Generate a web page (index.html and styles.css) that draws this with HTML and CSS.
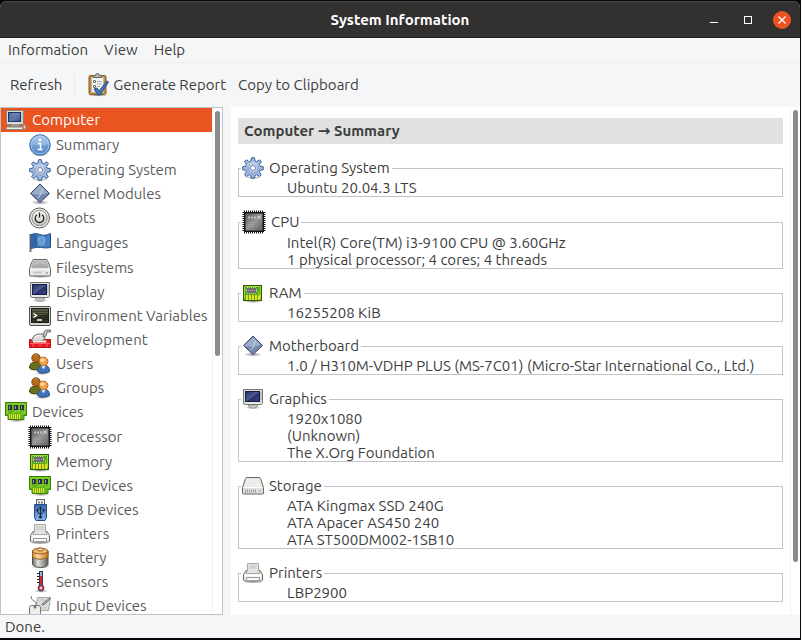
FILE: index.html
```html
<!DOCTYPE html>
<html lang="en">
<head>
<meta charset="utf-8">
<title>System Information</title>
<link rel="stylesheet" href="styles.css">
</head>
<body>
<svg class="sprite" aria-hidden="true">
  <defs>
    <linearGradient id="g-screen" x1="0" y1="0" x2="1" y2="1"><stop offset="0" stop-color="#2c3e76"/><stop offset=".55" stop-color="#5f7bb2"/><stop offset="1" stop-color="#3b4c82"/></linearGradient>
    <linearGradient id="g-dark" x1="0" y1="0" x2="1" y2="1"><stop offset="0" stop-color="#2a3264"/><stop offset=".5" stop-color="#4d5b90"/><stop offset=".55" stop-color="#28306a"/><stop offset="1" stop-color="#39447a"/></linearGradient>
    <linearGradient id="g-info" x1="0" y1="0" x2="0" y2="1"><stop offset="0" stop-color="#94bce8"/><stop offset="1" stop-color="#4e85c6"/></linearGradient>
    <linearGradient id="g-metal" x1="0" y1="0" x2="0" y2="1"><stop offset="0" stop-color="#fdfdfd"/><stop offset="1" stop-color="#c4c4c2"/></linearGradient>
    <linearGradient id="g-chip" x1="0" y1="0" x2="1" y2="1"><stop offset="0" stop-color="#5a5a5a"/><stop offset=".5" stop-color="#979797"/><stop offset="1" stop-color="#606060"/></linearGradient>
    <linearGradient id="g-can" x1="0" y1="0" x2="1" y2="0"><stop offset="0" stop-color="#686862"/><stop offset=".35" stop-color="#e3e3df"/><stop offset="1" stop-color="#60605b"/></linearGradient>
    <linearGradient id="g-copper" x1="0" y1="0" x2="1" y2="0"><stop offset="0" stop-color="#d98f35"/><stop offset=".35" stop-color="#fbdca4"/><stop offset="1" stop-color="#c2761f"/></linearGradient>
    <linearGradient id="g-usb" x1="0" y1="0" x2="0" y2="1"><stop offset="0" stop-color="#3868ae"/><stop offset="1" stop-color="#86b2e6"/></linearGradient>
    <radialGradient id="g-shade"><stop offset="0" stop-color="#000" stop-opacity=".45"/><stop offset="1" stop-color="#000" stop-opacity="0"/></radialGradient>
  </defs>
  <symbol id="i-computer" viewBox="0 0 22 22">
    <path d="M1.500 1.500h16l1 1v12l-1 1h-16z" fill="#dcdcd8" stroke="#85857f"/>
    <rect x="3.500" y="3.500" width="12" height="9" fill="url(#g-screen)" stroke="#25315f"/>
    <path d="M4 4h11L5 9z" fill="#fff" opacity=".18"/>
    <path d="M17 3v11" stroke="#b9b9b3"/>
    <rect x="6" y="15" width="8" height="2" fill="#999993"/>
    <path d="M2.500 17.500h14l2 3h-18z" fill="#efefea" stroke="#85857f"/>
    <path d="M3 18.500h13" stroke="#bab9b0"/>
    <ellipse cx="19.500" cy="18" rx="1.500" ry="2" fill="#ddd9d5" stroke="#8f8a84"/>
  </symbol>
  <symbol id="i-info" viewBox="0 0 22 22">
    <ellipse cx="11" cy="20.500" rx="9" ry="1.500" fill="url(#g-shade)"/>
    <circle cx="11" cy="11" r="10.300" fill="url(#g-info)" stroke="#3668a4"/>
    <circle cx="11" cy="11" r="9" fill="none" stroke="#a9cbee" opacity=".8"/>
    <path d="M2 10a9 9 0 0 1 18 0q-9 3-18 0z" fill="#fff" opacity=".2"/>
    <circle cx="11" cy="6" r="1.400" fill="#fff"/>
    <path d="M9 9.500h2.500v6M8.500 15.500h5" fill="none" stroke="#fff" stroke-width="1.500"/>
  </symbol>
  <symbol id="i-gear" viewBox="0 0 22 22">
    <ellipse cx="11" cy="20.500" rx="9" ry="1.500" fill="url(#g-shade)"/>
    <path d="M9.500.7h3l.6 3.300 1.600.7 2.900-1.900 1.800 1.800-1.900 2.900.7 1.600 3.100.6v3l-3.200.6-.7 1.600 1.900 2.800-1.900 1.900-2.800-1.900-1.600.6-.6 3.100h-3l-.6-3.100-1.600-.6-2.800 1.900-1.900-1.900 1.900-2.800-.7-1.600-3.100-.6v-3l3.100-.6.7-1.600-1.900-2.900 1.800-1.800 2.900 1.900 1.600-.7z" fill="#9fb8dd" stroke="#3d62a0"/>
    <circle cx="11" cy="11" r="5" fill="#c3cbe0" stroke="#8d9fc4"/>
    <path d="M5 9q5-6 11-1" stroke="#dce7f7" fill="none"/>
    <circle cx="11" cy="11" r="2.500" fill="#fff" stroke="#6d8aba"/>
  </symbol>
  <symbol id="i-module" viewBox="0 0 22 22">
    <ellipse cx="11" cy="19.500" rx="9" ry="2.300" fill="url(#g-shade)"/>
    <path d="M11 1l9.500 9.500L11 19.500 1.500 10.500z" fill="#7387ac" stroke="#354568"/>
    <path d="M11 2l8 8-8 2-9-1z" fill="#a6b6d1" opacity=".8"/>
    <path d="M14 5l-2 4-1 4-3 2" stroke="#c3cfe2" fill="none"/>
  </symbol>
  <symbol id="i-power" viewBox="0 0 22 22">
    <circle cx="10.500" cy="11" r="10" fill="#e7e7e4" stroke="#5d5d5a"/>
    <circle cx="10.500" cy="11" r="7.600" fill="url(#g-metal)" stroke="#8b8b87"/>
    <path d="M8 7.700a4.300 4.300 0 1 0 5 0M10.500 5.500v5" fill="none" stroke="#20201f" stroke-width="1.300"/>
  </symbol>
  <symbol id="i-flag" viewBox="0 0 22 22">
    <path d="M1.500 2v18" stroke="#777" stroke-width="2"/>
    <path d="M2 2.500q5-2 9 0t10.500-1v14q-5 1-9 0t-10.500 1z" fill="#477fc0" stroke="#254e88"/>
    <path d="M3 3q4-1 5 0v12q-3-1-5 0z" fill="#2857a0" opacity=".7"/>
    <circle cx="12.500" cy="8" r="3.300" fill="#6598ce" stroke="#8fb6df"/>
    <path d="M9 12q3.500 2 7 0" stroke="#8fb6df" fill="none"/>
  </symbol>
  <symbol id="i-drive" viewBox="0 0 22 22">
    <ellipse cx="11" cy="19.500" rx="10.500" ry="1.500" fill="url(#g-shade)"/>
    <path d="M3.500 3.500q.3-1 1.500-1h12q1.200 0 1.500 1l3 8v6.500q0 1-1 1h-19q-1 0-1-1V11.500z" fill="#e9e9e7" stroke="#666663"/>
    <path d="M4.500 3.500h13l2.500 8H2z" fill="#aaaaaa"/>
    <path d="M4.500 4h13l1.500 5Q11 5 3 9z" fill="#b9b9b9"/>
    <path d="M1.500 12h19" stroke="#fff"/>
    <path d="M4 15.500h9" stroke="#c6c6c4" stroke-width="2"/><path d="M17 16h2" stroke="#777"/>
  </symbol>
  <symbol id="i-storage" viewBox="0 0 22 22">
    <path d="M3.500 3.500q.3-1 1.500-1h12q1.200 0 1.500 1l3 9v5.500q0 1-1 1h-19q-1 0-1-1V12.500z" fill="#e1e1df" stroke="#666663"/>
    <path d="M4.500 3.500h13l2.500 9H2z" fill="#eeeeec"/>
    <path d="M5 11L14 4M9 12L17 5" stroke="#e0e0de"/>
    <path d="M1.500 12.500h19" stroke="#fff"/>
    <path d="M3 16h12" stroke="#999995" stroke-width="3" stroke-dasharray="1 1"/><path d="M17 16h2" stroke="#999"/>
  </symbol>
  <symbol id="i-display" viewBox="0 0 22 22">
    <ellipse cx="11" cy="19.500" rx="8" ry="1.700" fill="url(#g-shade)"/>
    <path d="M6.500 17q0 3 4.500 3t4.500-3z" fill="#d6d6d2" stroke="#92928e"/>
    <path d="M1.500 1.500h19v14l-1 1H3l-1.500-1z" fill="#dcdcd8" stroke="#777772"/>
    <rect x="3.500" y="3.500" width="14" height="10" fill="url(#g-dark)" stroke="#171d4b"/>
    <path d="M19 4v8" stroke="#aaaaa3"/><path d="M3 15h15" stroke="#f6f6f4"/>
  </symbol>
  <symbol id="i-terminal" viewBox="0 0 22 22">
    <rect x=".5" y="1.500" width="21" height="19" rx="1.500" fill="#d6d6d1" stroke="#50504c"/>
    <rect x="2.500" y="3.500" width="17" height="14" fill="#303528" stroke="#181b14"/>
    <path d="M3 4h16v5L3 13z" fill="#73785b" opacity=".55"/>
    <path d="M3 6.500h16M3 8.500h16M3 10.500h16M3 12.500h16M3 14.500h16" stroke="#11140d" opacity=".45"/>
    <path d="M4.500 8.500l3 2-3 2M8 15h5" fill="none" stroke="#fff" stroke-width="1.500"/>
  </symbol>
  <symbol id="i-dev" viewBox="0 0 22 22">
    <path d="M.5 10.500h21v8H.500z" fill="#e91b20" stroke="#b90e13"/>
    <path d="M1 14.500h20M6 11v4M17 11v4M4 15v3M11 15v3M18 15v3" stroke="#ff6669"/>
    <path d="M2 12l3-5q2-2 5-2h4q2 2 2 5l-4 2z" fill="#dcdcd8" stroke="#6d6d69"/>
    <path d="M4 12.500h13" stroke="#eeeeec" stroke-width="2"/>
    <path d="M14 8l1-5q1-2 3-2h3.500v2H18l-1 4z" stroke="#6d6d69" fill="#ccccc9"/>
    <path d="M6 8q2-2 6-1" stroke="#fff" fill="none"/>
  </symbol>
  <symbol id="i-users" viewBox="0 0 22 22">
    <ellipse cx="13" cy="20.500" rx="8" ry="1.500" fill="url(#g-shade)"/>
    <path d="M.5 15q0-6 6-6t6 6q-2 2-6 2-5 0-6-2z" fill="#66711c" stroke="#424a0b"/>
    <circle cx="7" cy="5" r="4.200" fill="#b5691f" stroke="#7d430c"/>
    <path d="M4.500 4q1.500-3 4-2" stroke="#d79652" fill="none"/>
    <path d="M8.500 18.500q0-6.500 6-6.500t6 6.500q-1.500 1.500-6 1.500t-6-1.500z" fill="#4474b8" stroke="#254c8d"/>
    <path d="M12 12.500l2.500 3.500 2.500-3.500z" fill="#fff"/>
    <circle cx="14.500" cy="8.500" r="4.400" fill="#f0a047" stroke="#b86a1b"/>
    <ellipse cx="13.500" cy="7" rx="2.400" ry="2" fill="#ffd49a"/>
  </symbol>
  <symbol id="i-card" viewBox="0 0 22 22">
    <ellipse cx="12" cy="19.500" rx="9" ry="1.700" fill="url(#g-shade)"/>
    <path d="M.5 1.500h21v13H19v4H3v-4H.500z" fill="#62b51a" stroke="#398300"/>
    <path d="M2 13V3h18v9h-4M8 12l3-2h5" stroke="#9bdd3b" fill="none"/>
    <path d="M3 4h4v5H3zM9 4h4v5H9zM15 4h4v5h-4z" fill="#26323e"/>
    <path d="M4.500 5v3M10.500 5v3M16.500 5v3" stroke="#93a3a9"/>
    <path d="M4 15.500h12" stroke="#eadf36" stroke-width="5" stroke-dasharray="1 1"/>
  </symbol>
  <symbol id="i-chip" viewBox="0 0 24 24">
    <rect x="2" y="2" width="20" height="20" fill="#171717"/>
    <path d="M2 1.500h20M2 22.500h20M1.500 2v20M22.500 2v20" stroke="#111" stroke-width="2" stroke-dasharray="1 1"/>
    <rect x="3.500" y="3.500" width="17" height="17" rx="1" fill="url(#g-chip)" stroke="#4a4a4a"/>
    <path d="M6 7.500h8" stroke="#c0c0c0" stroke-width="2" stroke-dasharray="2 1"/><path d="M15.500 6.500h2.500v2.500M15 9l2-2" fill="none" stroke="#d5d5d5"/>
    <path d="M6 12.500h9M6 14.500h8M6 16.500h9" stroke="#aaa" stroke-dasharray="3 1" opacity=".6"/>
  </symbol>
  <symbol id="i-memory" viewBox="0 0 22 22">
    <ellipse cx="11" cy="19.500" rx="10" ry="1.500" fill="url(#g-shade)"/>
    <rect x="1.500" y="3.500" width="18" height="15" fill="#55a811" stroke="#285d02"/>
    <path d="M2.500 17V4.500h16V17" stroke="#98db37" fill="none"/>
    <rect x="5" y="6" width="9" height="5" fill="#6c6e6b"/><path d="M5 5.500h9M5 11.500h9" stroke="#c5c5c3" stroke-dasharray="1 1"/><path d="M4.500 7v3M14.500 7v3" stroke="#b5b5b3"/>
    <path d="M6 8.500h7" stroke="#999" stroke-dasharray="2 1"/>
    <path d="M4 15.500h14" stroke="#f0dd22" stroke-width="5" stroke-dasharray="2 1"/>
    <path d="M16.500 9v5" stroke="#b5c922"/>
  </symbol>
  <symbol id="i-usb" viewBox="0 0 22 22">
    <rect x="7.500" y=".5" width="8" height="6" fill="#ececea" stroke="#666663"/><path d="M9 3.500h2M12 3.500h2" stroke="#888" stroke-width="2"/>
    <path d="M5.500 5.500h12v13l-1.500 3H7l-1.500-3z" fill="url(#g-usb)" stroke="#244b84"/>
    <path d="M11.500 8v10M8.500 11v2l3 2.500 3-2.500v-2" fill="none" stroke="#17243b"/>
    <path d="M11.500 7l-1.500 3h3z" fill="#17243b"/><circle cx="11.500" cy="18" r="1.500" fill="#17243b"/><path d="M7.500 10h2v2h-2zM13.500 10h2v2h-2z" fill="#17243b"/>
  </symbol>
  <symbol id="i-printer" viewBox="0 0 22 22">
    <ellipse cx="11" cy="20" rx="10" ry="1.500" fill="url(#g-shade)"/>
    <path d="M4 8.500h14l2.500 4v5.500l-1 1h-17l-1-1v-5.500z" fill="#ececea" stroke="#666663"/>
    <path d="M5.500 1.500h11v7l1.500 3H4l1.500-3z" fill="#e3e3e1" stroke="#aaaaa7"/>
    <path d="M7 3h8v4H7z" fill="#d3d3d1"/>
    <path d="M3 13.500h16" stroke="#fff" stroke-width="2"/><path d="M4.500 18v-2.500h13V18" stroke="#999995" fill="#f6f6f4"/>
  </symbol>
  <symbol id="i-battery" viewBox="0 0 22 22">
    <ellipse cx="11" cy="19.500" rx="10" ry="2" fill="url(#g-shade)"/>
    <path d="M3.500 4v13.500q2 3 8 3t7.500-3V4z" fill="url(#g-can)" stroke="#52524e"/>
    <path d="M3.500 4v6q3 2.300 7.500 2.300T19 10V4z" fill="url(#g-copper)" stroke="#9a621e"/>
    <ellipse cx="11.250" cy="4" rx="7.700" ry="2.800" fill="#f1bd70" stroke="#945a18"/>
    <ellipse cx="11.250" cy="2.500" rx="3" ry="1.500" fill="#ffe1ac" stroke="#8e5516"/>
  </symbol>
  <symbol id="i-sensor" viewBox="0 0 22 22">
    <ellipse cx="12" cy="20" rx="7" ry="1.800" fill="url(#g-shade)"/>
    <rect x="10.500" y=".5" width="3" height="15" fill="#9eb2d8" stroke="#2b3555"/>
    <path d="M12 5v11" stroke="#e12428" stroke-width="2"/>
    <circle cx="12" cy="17" r="3" fill="#e12428" stroke="#444b69"/><path d="M10.500 17h3M12 15.500v3" stroke="#fff"/>
    <path d="M8 2.500h2M8 5.500h2M8 8.500h2M8 11.500h2" stroke="#222"/>
  </symbol>
  <symbol id="i-input" viewBox="0 0 22 22">
    <path d="M8.500 2.500h13l-2 13H6.500z" fill="#dcdcda" stroke="#a5a5a2"/>
    <path d="M10 5h7M9 13h9" stroke="#c5c5c2"/>
    <path d="M21 3l-7 5-1 2 3-1 5-5z" fill="#b4b4b1" stroke="#777774"/>
    <path d="M2 1q0 4 3 5t2 5" fill="none" stroke="#777774"/>
    <rect x=".5" y="10.500" width="11" height="13" rx="2" fill="#ececea" stroke="#777774"/><circle cx="6" cy="12" r="1.500" fill="#777"/>
  </symbol>
  <symbol id="i-report" viewBox="0 0 22 24">
    <ellipse cx="11" cy="22.300" rx="10.500" ry="1.300" fill="url(#g-shade)"/>
    <rect x="2" y="2.500" width="17" height="19" rx="1.500" fill="#c88b35" stroke="#8b5b1c"/>
    <rect x="4.500" y="4.500" width="12" height="15" fill="#f5f5f3" stroke="#b5b5b0"/>
    <path d="M6.500 4.500v-2h2q0-2 2-2t2 2h2v2z" fill="#b6b6b2" stroke="#666663"/>
    <path d="M6.500 7.500h2v2h-2zM6.500 12.500h2v2h-2z" fill="#fff" stroke="#777"/><path d="M10 8.500h5M10 11h5M10 13.500h3" stroke="#aaa"/>
    <path d="M7 16l3-1 2 3L20 8l1.500 1L13 22h-2z" fill="#4778b8" stroke="#274e87"/>
  </symbol>
</svg>

<div class="window">
  <header class="titlebar">
    <h1 class="title">System Information</h1>
    <div class="controls">
      <button class="control" aria-label="Minimize"><svg viewBox="0 0 18 18"><path d="M5 11.500h8" stroke="#fff"/></svg></button>
      <button class="control" aria-label="Maximize"><svg viewBox="0 0 18 18"><rect x="5.500" y="5.500" width="7" height="7" fill="none" stroke="#fff"/></svg></button>
      <button class="control close" aria-label="Close"><svg viewBox="0 0 18 18"><path d="M5.500 5.500l7 7M12.500 5.500l-7 7" stroke="#fff" stroke-width="1.200"/></svg></button>
    </div>
  </header>
  <nav class="menubar">
    <button>Information</button><button>View</button><button>Help</button>
  </nav>
  <div class="toolbar">
    <button>Refresh</button>
    <span class="separator"></span>
    <button class="report"><svg class="report-icon"><use href="#i-report"/></svg>Generate Report</button>
    <button>Copy to Clipboard</button>
  </div>
  <main class="panes">
    <nav class="sidebar">
      <ul class="tree">
        <li><a href="#" class="row selected"><svg class="icon"><use href="#i-computer"/></svg>Computer</a></li>
        <li><a href="#" class="row child tall"><svg class="icon"><use href="#i-info"/></svg>Summary</a></li>
        <li><a href="#" class="row child"><svg class="icon"><use href="#i-gear"/></svg>Operating System</a></li>
        <li><a href="#" class="row child"><svg class="icon"><use href="#i-module"/></svg>Kernel Modules</a></li>
        <li><a href="#" class="row child"><svg class="icon"><use href="#i-power"/></svg>Boots</a></li>
        <li><a href="#" class="row child tall"><svg class="icon"><use href="#i-flag"/></svg>Languages</a></li>
        <li><a href="#" class="row child"><svg class="icon"><use href="#i-drive"/></svg>Filesystems</a></li>
        <li><a href="#" class="row child"><svg class="icon"><use href="#i-display"/></svg>Display</a></li>
        <li><a href="#" class="row child"><svg class="icon"><use href="#i-terminal"/></svg>Environment Variables</a></li>
        <li><a href="#" class="row child"><svg class="icon"><use href="#i-dev"/></svg>Development</a></li>
        <li><a href="#" class="row child"><svg class="icon"><use href="#i-users"/></svg>Users</a></li>
        <li><a href="#" class="row child"><svg class="icon"><use href="#i-users"/></svg>Groups</a></li>
        <li><a href="#" class="row"><svg class="icon"><use href="#i-card"/></svg>Devices</a></li>
        <li><a href="#" class="row child tall"><svg class="icon large"><use href="#i-chip"/></svg>Processor</a></li>
        <li><a href="#" class="row child"><svg class="icon"><use href="#i-memory"/></svg>Memory</a></li>
        <li><a href="#" class="row child"><svg class="icon"><use href="#i-card"/></svg>PCI Devices</a></li>
        <li><a href="#" class="row child"><svg class="icon"><use href="#i-usb"/></svg>USB Devices</a></li>
        <li><a href="#" class="row child"><svg class="icon"><use href="#i-printer"/></svg>Printers</a></li>
        <li><a href="#" class="row child"><svg class="icon"><use href="#i-battery"/></svg>Battery</a></li>
        <li><a href="#" class="row child"><svg class="icon"><use href="#i-sensor"/></svg>Sensors</a></li>
        <li><a href="#" class="row child"><svg class="icon"><use href="#i-input"/></svg>Input Devices</a></li>
      </ul>
      <div class="track"><div class="thumb tree-thumb"></div></div>
    </nav>
    <section class="content">
      <div class="details">
        <h2 class="heading">Computer → Summary</h2>
        <fieldset><legend><svg class="icon"><use href="#i-gear"/></svg>Operating System</legend><p>Ubuntu 20.04.3 LTS</p></fieldset>
        <fieldset><legend><svg class="icon large"><use href="#i-chip"/></svg>CPU</legend><p>Intel(R) Core(TM) i3-9100 CPU @ 3.60GHz</p><p>1 physical processor; 4 cores; 4 threads</p></fieldset>
        <fieldset><legend><svg class="icon"><use href="#i-memory"/></svg>RAM</legend><p>16255208 KiB</p></fieldset>
        <fieldset><legend><svg class="icon"><use href="#i-module"/></svg>Motherboard</legend><p>1.0 / H310M-VDHP PLUS (MS-7C01) (Micro-Star International Co., Ltd.)</p></fieldset>
        <fieldset><legend><svg class="icon"><use href="#i-display"/></svg>Graphics</legend><p>1920x1080</p><p>(Unknown)</p><p>The X.Org Foundation</p></fieldset>
        <fieldset><legend><svg class="icon"><use href="#i-storage"/></svg>Storage</legend><p>ATA Kingmax SSD 240G</p><p>ATA Apacer AS450 240</p><p>ATA ST500DM002-1SB10</p></fieldset>
        <fieldset><legend><svg class="icon"><use href="#i-printer"/></svg>Printers</legend><p>LBP2900</p></fieldset>
      </div>
      <div class="track"><div class="thumb details-thumb"></div></div>
    </section>
  </main>
  <footer class="statusbar">Done.</footer>
</div>
</body>
</html>
```
FILE: styles.css
```css
* {
  box-sizing: border-box;
}

body {
  margin: 0;
  height: 100vh;
  padding: 1px 1px 2px 0;
  background: #05070d;
  color: #3d3d3d;
  font: 15px/16px Ubuntu, "DejaVu Sans", sans-serif;
  overflow: hidden;
}

.sprite {
  position: absolute;
  width: 0;
  height: 0;
}

button {
  padding: 0;
  border: 0;
  background: none;
  color: inherit;
  font: inherit;
  white-space: nowrap;
}

.window {
  display: flex;
  flex-direction: column;
  height: 100%;
  background: #f5f6f7;
  border-radius: 7px 7px 0 0;
  overflow: hidden;
}

.titlebar {
  display: grid;
  grid-template-columns: 1fr auto 1fr;
  align-items: center;
  flex: none;
  height: 37px;
  padding: 0 9px;
  border-top: 1px solid #4b4848;
  border-bottom: 1px solid #201e1e;
  background: #333030;
  color: #fff;
}

.title {
  grid-column: 2;
  margin: 0;
  font-size: 15px;
  line-height: 20px;
}

.controls {
  display: flex;
  justify-content: flex-end;
  gap: 16px;
}

.control {
  width: 18px;
  height: 18px;
  border-radius: 50%;
}

.control svg {
  display: block;
}

.close {
  background: #e95420;
}

.menubar {
  display: flex;
  flex: none;
  gap: 16px;
  height: 25px;
  padding: 0 8px;
  border-bottom: 1px solid #ebedef;
}

.toolbar {
  display: flex;
  align-items: center;
  flex: none;
  gap: 12px;
  height: 44px;
  padding: 0 10px;
}

.separator {
  width: 1px;
  height: 22px;
  background: #e9ebed;
}

.report {
  display: flex;
  align-items: center;
  gap: 4px;
}

.report-icon {
  width: 22px;
  height: 24px;
}

.panes {
  display: flex;
  flex: 1;
  gap: 8px;
  min-height: 0;
}

.sidebar {
  display: flex;
  flex: none;
  width: 223px;
  border: 1px solid #c0c3c9;
  background: #fff;
}

.tree {
  flex: 1;
  min-width: 0;
  margin: 0;
  padding: 0;
  overflow: hidden;
  list-style: none;
}

.row {
  display: flex;
  align-items: center;
  gap: 5px;
  height: 24px;
  padding-left: 4px;
  color: #5c5c5c;
  text-decoration: none;
  white-space: nowrap;
}

.child {
  padding-left: 28px;
}

.tall {
  height: 26px;
}

.selected {
  background: #e95420;
  color: #fff;
}

.icon {
  flex: none;
  width: 22px;
  height: 22px;
}

.large {
  width: 24px;
  height: 24px;
}

.row .large {
  margin: 0 -1px;
}

.track {
  flex: none;
  width: 10px;
  padding: 3px 2px;
  border-left: 1px solid #eff0f1;
  background: #fff;
}

.thumb {
  width: 5px;
  border-radius: 3px;
  background: #8b8b8b;
}

.tree-thumb {
  height: 49%;
}

.details-thumb {
  height: 90%;
}

.content {
  display: flex;
  flex: 1;
  min-width: 0;
  background: #fff;
}

.details {
  flex: 1;
  min-width: 0;
  padding: 11px 7px 0;
  overflow: hidden;
}

.heading {
  margin: 0;
  padding: 0 6px;
  background: #e1e1e1;
  font-size: 15px;
  line-height: 26px;
}

fieldset {
  min-width: 0;
  margin: 13px 0 0;
  padding: 0 0 0 48px;
  border: 1px solid #c0c3c9;
}

legend {
  display: flex;
  align-items: center;
  gap: 5px;
  margin-left: -46px;
  padding: 0 2px 0 1px;
}

p {
  margin: 0;
  line-height: 17px;
  white-space: nowrap;
}

.statusbar {
  flex: none;
  padding: 4px 5px 3px;
}
```
